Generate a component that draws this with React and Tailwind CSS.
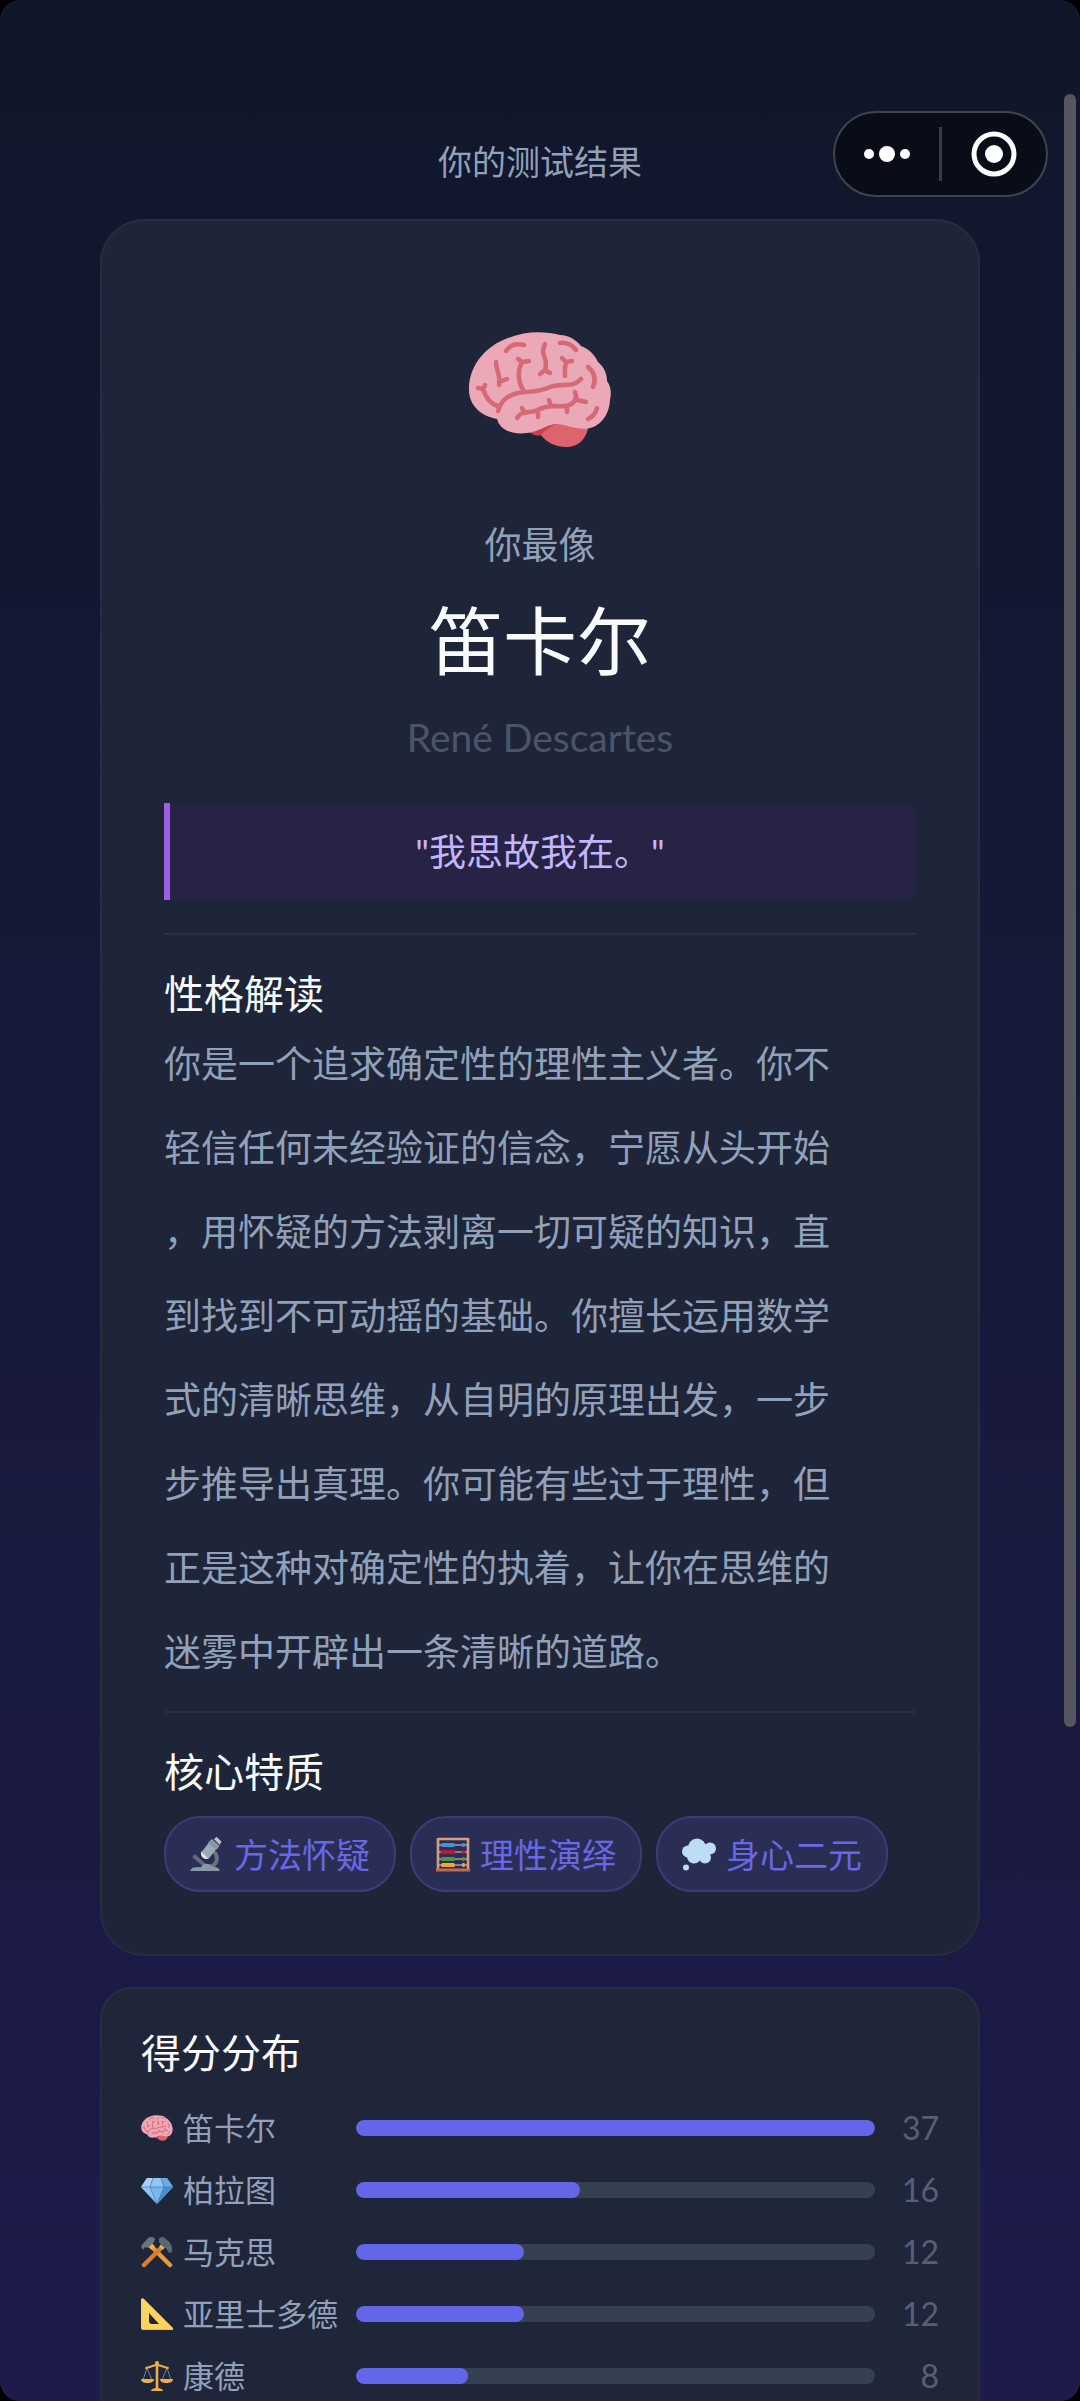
import React from "react";

const traits = [
  { icon: Microscope, label: "方法怀疑" },
  { icon: Abacus, label: "理性演绎" },
  { icon: Thought, label: "身心二元" },
];

const scores = [
  { icon: Brain, name: "笛卡尔", score: 37 },
  { icon: Gem, name: "柏拉图", score: 16 },
  { icon: Hammers, name: "马克思", score: 12 },
  { icon: SetSquare, name: "亚里士多德", score: 12 },
  { icon: Scales, name: "康德", score: 8 },
];

const maxScore = 37;

const description =
  "你是一个追求确定性的理性主义者。你不轻信任何未经验证的信念，宁愿从头开始，用怀疑的方法剥离一切可疑的知识，直到找到不可动摇的基础。你擅长运用数学式的清晰思维，从自明的原理出发，一步步推导出真理。你可能有些过于理性，但正是这种对确定性的执着，让你在思维的迷雾中开辟出一条清晰的道路。";

function Brain({ className }) {
  return (
    <svg viewBox="0 0 144 118" className={className} aria-hidden="true">
      <path d="M58 97c4 6 10 9 16 7l26-7 2-14z" fill="#c8414b" />
      <path d="M73 104c6 8 15 12 25 12 12 0 19-7 22-18-12-2-22-5-32-5-7 3-12 7-15 11z" fill="#dd636e" />
      <path d="M29 88C10 84 0 72 1 56 2 32 20 14 40 7 58 0 76 0 92 4c9 0 16 5 21 11 8 3 14 9 17 16 6 5 9 12 9 19 5 7 4 14 3 19-1 16-10 27-24 29-11 0-22-5-31-5-11 2-17 8-28 9-15 2-27-3-30-14z" fill="#eba8b7" />
      <g fill="none" stroke="#d66976" strokeWidth="4.5" strokeLinecap="round" strokeLinejoin="round">
        <path d="M30 80c3-11 10-16 20-18 9-2 20 0 32-6 13-5 22 2 31-8" />
        <path d="M10 57l5 1 2-4M15 58c3 9 7 15 15 17M28 31c0 9 5 13 3 23M31 51l8-3" />
        <path d="M50 28l4 3 7-1M54 31c-5 9-4 21 2 29M38 20c4-6 10-8 18-6" />
        <path d="M77 13c-6 12 4 12 0 27M72 43l5-4 5 3M92 12c7-1 12 2 16 7" />
        <path d="M94 27l4 4 6-1M98 32c-2 5-1 9-1 13M120 36c7 6 8 13 5 20M129 77c-1 5-5 9-9 11" />
        <path d="M49 87c5-8 11-5 18-7 9-4 13-5 22-5 8 1 17 0 19-9M54 77l3 5M70 80v6M81 69l2 6M99 75v6M107 61l2 8 9 2" />
      </g>
    </svg>
  );
}

function Gem({ className }) {
  return (
    <svg viewBox="0 0 32 32" className={className} aria-hidden="true">
      <path d="M6 4h20l6 9-16 17L0 13z" fill="#70aee4" />
      <path d="M6 4h6l-3 9H0z" fill="#a6d3f5" />
      <path d="M12 4h8l3 9H9z" fill="#8fc6f2" />
      <path d="M20 4h6l6 9h-9z" fill="#6baae2" />
      <path d="M0 13h9l7 17z" fill="#8fc4ef" />
      <path d="M9 13h14l-7 17z" fill="#7bb7ea" />
      <path d="M23 13h9L16 30z" fill="#4c8fd0" />
      <path d="M0 13h32M12 4L9 13l7 17 7-17-3-9" fill="none" stroke="#3d78b5" strokeWidth="0.7" />
    </svg>
  );
}

function Hammers({ className }) {
  return (
    <svg viewBox="0 0 32 32" className={className} aria-hidden="true">
      <path d="M9 9l20 20" stroke="#e9983d" strokeWidth="4.5" strokeLinecap="round" />
      <path d="M23 9L3 29" stroke="#d98227" strokeWidth="4.5" strokeLinecap="round" />
      <path d="M9 9l3 3M23 9l-3 3" stroke="#f4b63f" strokeWidth="5" />
      <path d="M0 10L7 2c3-2 6-1 7 1l-1 3-6 6-3-1-2 3z" fill="#66757f" />
      <path d="M18 3c2-3 5-2 7 0 4 3 7 7 6 13l-3 1-3-5-3-1-4-5z" fill="#5a6872" />
    </svg>
  );
}

function SetSquare({ className }) {
  return (
    <svg viewBox="0 0 32 32" className={className} aria-hidden="true">
      <path
        d="M0 2c0-2 2-2 3-1l29 29c1 1 0 2-1 2H3c-2 0-3-1-3-3zM8 15v8c0 2 1 3 3 3h7z"
        fill="#fbd35e"
        fillRule="evenodd"
      />
      <path d="M0 29c0 2 1 3 3 3h28" fill="none" stroke="#e9a83f" strokeWidth="1" />
    </svg>
  );
}

function Scales({ className }) {
  return (
    <svg viewBox="0 0 32 32" className={className} aria-hidden="true">
      <path d="M6 8L2 20M6 8l5 12M26 8l-5 12M26 8l4 12" stroke="#8899a6" strokeWidth="0.8" />
      <path d="M5 8c5-1 8-3 11-3s6 2 11 3" fill="none" stroke="#f2ad4b" strokeWidth="2" strokeLinecap="round" />
      <path d="M16 3v25" stroke="#f2ad4b" strokeWidth="2.6" />
      <circle cx="16" cy="3" r="2" fill="#f2ad4b" />
      <path d="M0 19h13c0 3-3 4-6.500 4s-6.500-1-6.500-4zM19 19h13c0 3-3 4-6.500 4s-6.500-1-6.500-4z" fill="#f2ad4b" />
      <path d="M10 31c0-2 3-3 6-3s6 1 6 3z" fill="#f2ad4b" />
    </svg>
  );
}

function Microscope({ className }) {
  return (
    <svg viewBox="0 0 34 36" className={className} aria-hidden="true">
      <path d="M3 19l15 13" stroke="#5d6c78" strokeWidth="4" />
      <path d="M23 15c6 3 6 14-4 16" fill="none" stroke="#66757f" strokeWidth="4" />
      <path d="M0 35c0-3 3-4 6-4h5c1-4 8-5 11-1 3 1 8 1 8 5z" fill="#8899a6" />
      <path d="M21 3l8 6-10 13c-4 2-9-2-8-6z" fill="#9aaab4" />
      <path d="M11 15l7 7c-4 2-8-2-7-7z" fill="#e1e8ed" />
      <path d="M18 6l4-4 8 7-3 4z" fill="#8899a6" />
      <path d="M24 2l3-2 5 5-2 3z" fill="#b9c5ce" />
    </svg>
  );
}

function Abacus({ className }) {
  const rows = [
    { y: 8, fill: "#3b94d9" },
    { y: 15, fill: "#be1931" },
    { y: 22, fill: "#5c913b" },
    { y: 28, fill: "#f4a52c" },
  ];
  return (
    <svg viewBox="0 0 34 35" className={className} aria-hidden="true">
      <path d="M2 1v32M32 1v32M2 2h30" stroke="#d99e82" strokeWidth="2.6" />
      <path d="M0 33h34" stroke="#c1694f" strokeWidth="3" />
      {rows.map((row) => (
        <g key={row.y}>
          <path d={`M3 ${row.y}h28`} stroke="#ccd6dd" strokeWidth="1" />
          <rect x="5" y={row.y - 2} width="14" height="4" rx="1.5" fill={row.fill} />
          <rect x="26" y={row.y - 2} width="3" height="4" rx="1.2" fill={row.fill} />
        </g>
      ))}
    </svg>
  );
}

function Thought({ className }) {
  return (
    <svg viewBox="0 0 34 34" className={className} aria-hidden="true">
      <g fill="#bdddf4">
        <circle cx="15" cy="10" r="9" />
        <circle cx="6" cy="14" r="6" />
        <circle cx="28" cy="11" r="6" />
        <circle cx="23" cy="20" r="6" />
        <circle cx="12" cy="19" r="7" />
        <circle cx="21" cy="13" r="7" />
        <circle cx="4" cy="30" r="3" />
      </g>
    </svg>
  );
}

function SectionTitle({ children }) {
  return <h2 className="text-[40px] leading-14 text-slate-50">{children}</h2>;
}

export default function App() {
  return (
    <div className="h-screen bg-black font-['Lato','Noto_Sans_CJK_SC',sans-serif]">
      <div className="relative h-full overflow-hidden rounded-[20px] bg-linear-to-b from-[#10172a] to-[#1e1b4b]">
        {/* Mini program capsule */}
        <div className="absolute top-[111px] right-8 flex h-[86px] w-[215px] items-center rounded-full border-2 border-[#41444f] bg-[#090d18]">
          <button type="button" aria-label="更多" className="flex flex-1 items-center justify-center">
            <svg viewBox="0 0 46 16" className="h-4 w-[46px] fill-white">
              <circle cx="5" cy="8" r="5" />
              <circle cx="23" cy="8" r="8" />
              <circle cx="41" cy="8" r="5" />
            </svg>
          </button>
          <div className="h-[54px] w-[3px] bg-[#3a3d48]" />
          <button type="button" aria-label="关闭" className="flex flex-1 items-center justify-center">
            <svg viewBox="0 0 46 46" className="size-[46px]">
              <circle cx="23" cy="23" r="20" fill="none" stroke="#fff" strokeWidth="5" />
              <circle cx="23" cy="23" r="9" fill="#fff" />
            </svg>
          </button>
        </div>

        {/* Scroll thumb */}
        <div className="absolute top-[94px] right-1 h-[68%] w-3 rounded-full bg-[#56565f]" />

        <main className="px-[100px] pt-[134px]">
          <p className="text-center text-[34px] leading-14 text-slate-400">你的测试结果</p>

          <section className="mt-[29px] rounded-[44px] border-2 border-[#282c42] bg-[#1f2538] px-[62px] pt-[110px] pb-[62px]">
            <Brain className="mx-auto h-[118px] w-36" />

            <div className="mt-[66px] text-center">
              <p className="text-[37px] leading-[60px] text-slate-400">你最像</p>
              <h1 className="mt-3 text-[74px] leading-[108px] text-slate-50">笛卡尔</h1>
              <p className="mt-3 text-[39px] leading-[60px] text-[#4b5567]">René Descartes</p>
            </div>

            <blockquote className="mt-9 rounded-r-xl border-l-6 border-[#a05ce8] bg-[#262344] py-5 pr-1.5 text-center text-[37px] leading-[57px] text-[#c4b5fd]">
              "我思故我在。"
            </blockquote>

            <div className="mt-[33px] border-t-2 border-[#2a2f44] pt-[31px]">
              <SectionTitle>性格解读</SectionTitle>
              <p className="pr-16 text-[37px] leading-[84px] text-slate-400 [line-break:anywhere]">{description}</p>
            </div>

            <div className="mt-[17px] border-t-2 border-[#2a2f44] pt-[31px]">
              <SectionTitle>核心特质</SectionTitle>
              <ul className="mt-4 flex flex-wrap gap-[14px]">
                {traits.map(({ icon: Icon, label }) => (
                  <li
                    key={label}
                    className="flex h-[76px] items-center gap-[10px] rounded-[36px] border-2 border-[#3b3d77] bg-[#2a2e55] px-6 text-[34px] text-[#6668e6]"
                  >
                    <Icon className="h-[35px] w-[34px]" />
                    {label}
                  </li>
                ))}
              </ul>
            </div>
          </section>

          <section className="mt-[31px] rounded-4xl border-2 border-[#282c42] bg-[#20263a] px-[39px] pt-9 pb-10">
            <SectionTitle>得分分布</SectionTitle>
            <ul className="mt-4">
              {scores.map(({ icon: Icon, name, score }) => (
                <li key={name} className="flex h-[62px] items-center">
                  <span className="flex w-[215px] items-center gap-[10px] text-[31px] whitespace-nowrap text-slate-400">
                    <Icon className="size-8" />
                    {name}
                  </span>
                  <span className="h-4 flex-1 overflow-hidden rounded-full bg-[#354152]">
                    <span
                      className="block h-full rounded-full bg-[#6466ea]"
                      style={{ width: `${(score / maxScore) * 100}%` }}
                    />
                  </span>
                  <span className="w-16 text-right text-[32px] text-[#595e76]">{score}</span>
                </li>
              ))}
            </ul>
          </section>
        </main>
      </div>
    </div>
  );
}
